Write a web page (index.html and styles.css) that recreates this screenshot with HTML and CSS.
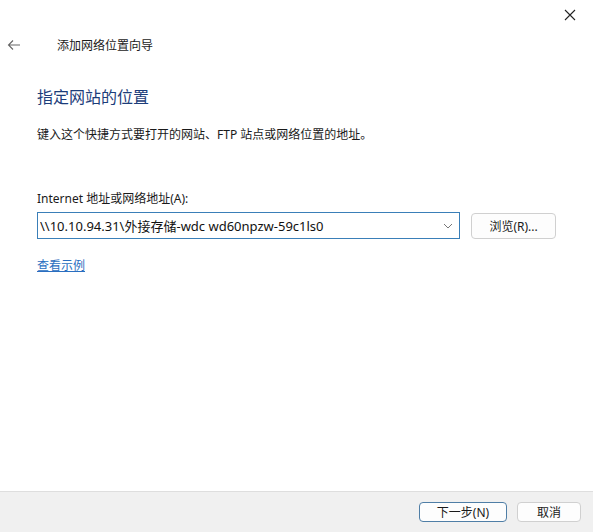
FILE: index.html
```html
<!DOCTYPE html>
<html lang="zh-CN">
<head>
    <meta charset="UTF-8">
    <title>添加网络位置向导</title>
    <link rel="stylesheet" href="styles.css">
</head>
<body>
<div class="wizard">
    <div class="titlebar">
        <button class="close" title="关闭">
            <svg width="12" height="12" viewBox="0 0 12 12"><path d="M1 1 L11 11 M11 1 L1 11" stroke="#222" stroke-width="1.1" fill="none"/></svg>
        </button>
    </div>
    <div class="header">
        <span class="back">
            <svg width="14" height="12" viewBox="0 0 14 12"><path d="M13 6 H1.5 M6 1.5 L1.5 6 L6 10.5" stroke="#666" stroke-width="1.1" fill="none"/></svg>
        </span>
        <span class="wizard-title">添加网络位置向导</span>
    </div>

    <div class="content">
        <h1 class="instruction">指定网站的位置</h1>
        <p class="desc">键入这个快捷方式要打开的网站、FTP 站点或网络位置的地址。</p>

        <label class="field-label" for="address">Internet 地址或网络地址(A):</label>
        <div class="field-row">
            <div class="combo">
                <input id="address" type="text" value="\\10.10.94.31\外接存储-wdc wd60npzw-59c1ls0">
                <svg class="chevron" width="10" height="6" viewBox="0 0 10 6"><path d="M1 1 L5 5 L9 1" stroke="#777" stroke-width="1" fill="none"/></svg>
            </div>
            <button class="btn">浏览(R)...</button>
        </div>
        <a class="example" href="#">查看示例</a>
    </div>

    <div class="footer">
        <button class="btn primary">下一步(N)</button>
        <button class="btn cancel">取消</button>
    </div>
</div>
</body>
</html>
```

FILE: styles.css
```css
body {
    margin: 0;
    background: #fff;
    font-family: "Segoe UI", "Noto Sans", "Noto Sans CJK SC", sans-serif;
    font-size: 12px;
    color: #1a1a1a;
}

.wizard {
    width: 593px;
    height: 532px;
    display: flex;
    flex-direction: column;
    background: #fff;
}

.titlebar {
    height: 30px;
    display: flex;
    justify-content: flex-end;
}

.close {
    width: 46px;
    height: 30px;
    border: none;
    background: transparent;
    padding: 0;
    display: flex;
    align-items: center;
    justify-content: center;
}

.header {
    height: 30px;
    display: flex;
    align-items: center;
}

.back {
    width: 14px;
    margin-left: 7px;
    display: flex;
}

.wizard-title {
    margin-left: 36px;
    font-size: 12px;
    color: #1a1a1a;
}

.content {
    flex: 1;
    padding: 0 37px;
}

.instruction {
    margin: 24px 0 0;
    font-size: 16px;
    font-weight: normal;
    color: #1c3d7a;
    line-height: 26px;
}

.desc {
    margin: 15px 0 0;
    line-height: 20px;
}

.field-label {
    display: block;
    margin-top: 45px;
    line-height: 18px;
}

.field-row {
    display: flex;
    align-items: center;
    margin-top: 4px;
}

.combo {
    width: 424px;
    height: 27px;
    box-sizing: border-box;
    border: 1px solid #3a7fb8;
    display: flex;
    align-items: center;
    background: #fff;
}

.combo input {
    flex: 1;
    min-width: 0;
    border: none;
    outline: none;
    padding: 0 0 0 2px;
    font-family: inherit;
    font-size: 13px;
    color: #111;
    background: transparent;
}

.chevron {
    margin: 0 6px 0 8px;
}

.btn {
    height: 26px;
    box-sizing: border-box;
    border: 1px solid #d0d0d0;
    border-radius: 4px;
    background: #fdfdfd;
    font-family: inherit;
    font-size: 12px;
    color: #1a1a1a;
    padding: 0;
}

.field-row .btn {
    width: 85px;
    margin-left: 11px;
}

.example {
    display: inline-block;
    margin-top: 17px;
    color: #2a6ec0;
    text-decoration: underline;
}

.footer {
    height: 40px;
    border-top: 1px solid #dedede;
    background: #f0f0f0;
    display: flex;
    align-items: center;
    justify-content: flex-end;
    gap: 10px;
    padding-right: 12px;
}

.footer .btn {
    width: 64px;
    height: 20px;
}

.footer .primary {
    width: 88px;
    border: 1px solid #4f7ea6;
}
```
